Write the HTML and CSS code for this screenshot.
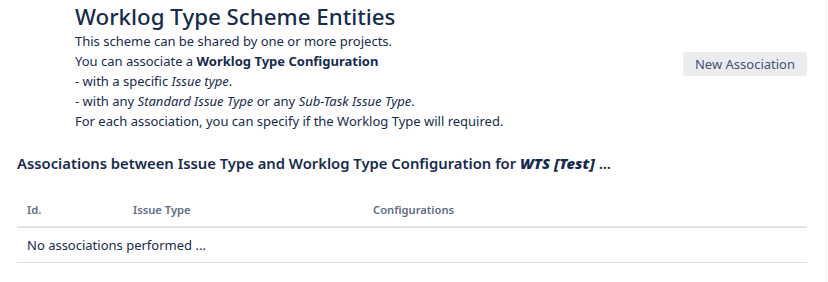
FILE: index.html
```html
<!DOCTYPE html>
<html lang="en">

<head>
    <meta charset="UTF-8">
    <meta name="viewport" content="width=device-width, initial-scale=1.0">
    <title>Worklog Type Scheme Entities</title>
    <link rel="stylesheet" href="styles.css">
</head>

<body>
    <div class="page">
        <!-- Header: title, description and action button -->
        <div class="page-header">
            <div class="header-text">
                <h1>Worklog Type Scheme Entities</h1>
                <div class="description">
                    <p>This scheme can be shared by one or more projects.</p>
                    <p>You can associate a <b>Worklog Type Configuration</b></p>
                    <p>- with a specific <i>Issue type</i>.</p>
                    <p>- with any <i>Standard Issue Type</i> or any <i>Sub-Task Issue Type</i>.</p>
                    <p>For each association, you can specify if the Worklog Type will required.</p>
                </div>
            </div>
            <div class="header-actions">
                <button type="button" class="aui-button">New Association</button>
            </div>
        </div>

        <h2>Associations between Issue Type and Worklog Type Configuration for <b><i>WTS [Test]</i></b> ...</h2>

        <table class="assoc-table">
            <thead>
                <tr>
                    <th class="col-id">Id.</th>
                    <th class="col-type">Issue Type</th>
                    <th>Configurations</th>
                </tr>
            </thead>
            <tbody>
                <tr>
                    <td colspan="3">No associations performed ...</td>
                </tr>
            </tbody>
        </table>
    </div>
</body>

</html>
```

FILE: styles.css
```css
/* General Styles */
body {
    margin: 0;
    padding: 0;
    background-color: #ffffff;
    color: #172b4d;
    font-family: "Noto Sans", "Open Sans", sans-serif;
    font-size: 13px;
    line-height: 20px;
}

.page {
    width: 790px;
    min-height: 282px;
    padding: 3px 19px 0 17px;
    border-right: 1px solid #f1f2f4;
    box-sizing: content-box;
}

.page-header {
    display: flex;
    align-items: center;
    padding-left: 58px;
}

.header-text {
    flex: 1;
}

h1 {
    margin: 0;
    font-size: 22.3px;
    line-height: 28px;
    font-weight: 500;
    color: #172b4d;
}

.description p {
    margin: 0;
}

.header-actions {
    margin-bottom: 7px;
}

.aui-button {
    height: 24px;
    padding: 0 12px;
    background-color: #ebecf0;
    color: #42526e;
    border: none;
    border-radius: 3px;
    font-family: inherit;
    font-size: 13px;
    cursor: pointer;
}

h2 {
    margin: 22px 0 0 0;
    font-size: 14.8px;
    line-height: 20px;
    font-weight: 600;
    color: #172b4d;
}

/* Associations table */
.assoc-table {
    width: 100%;
    margin-top: 20px;
    border-collapse: collapse;
    text-align: left;
}

.assoc-table th {
    padding: 8px 10px 7px 10px;
    line-height: 18px;
    font-size: 11.2px;
    font-weight: 600;
    color: #5e6c84;
    border-bottom: 2px solid #dfe1e6;
}

.assoc-table td {
    padding: 7px 10px;
    border-bottom: 1px solid #dfe1e6;
}

.col-id {
    width: 86px;
}

.col-type {
    width: 220px;
}
```
